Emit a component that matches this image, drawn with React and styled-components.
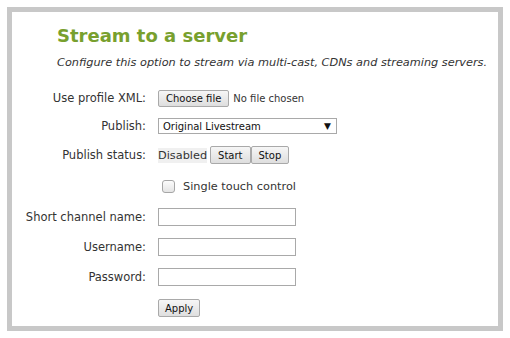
import React from "react";
import styled, { createGlobalStyle } from "styled-components";

const Global = createGlobalStyle`
  html, body { margin: 0; padding: 0; background: #ffffff; }
  body { font-family: "DejaVu Sans", Verdana, sans-serif; color: #333; }
`;

const Frame = styled.div`
  box-sizing: border-box;
  margin: 7px;
  width: 496px;
  height: 324px;
  border: 5px solid #c8c8c8;
  background: #fff;
  padding: 12px 0 0 0;
`;

const Title = styled.h1`
  margin: 0 0 0 45px;
  font-family: "DejaVu Sans", Verdana, sans-serif;
  font-weight: bold;
  font-size: 18px;
  line-height: 24px;
  color: #78a02e;
`;

const Desc = styled.p`
  margin: 8px 0 0 45px;
  font-size: 11.3px;
  font-style: italic;
  color: #333;
  line-height: 14px;
`;

const Form = styled.div`
  display: grid;
  grid-template-columns: 134px auto;
  column-gap: 12px;
  margin-top: 14px;
  align-items: center;
  font-size: 11.5px;
`;

const Label = styled.div`
  text-align: right;
  color: #333;
  height: ${(p) => p.$h || 30}px;
  line-height: ${(p) => p.$h || 30}px;
  white-space: nowrap;
`;

const Cell = styled.div`
  display: flex;
  align-items: center;
  height: ${(p) => p.$h || 30}px;
`;

const Btn = styled.button`
  font-family: "DejaVu Sans", Verdana, sans-serif;
  font-size: 10px;
  color: #111;
  height: ${(p) => p.$h || 17}px;
  padding: 0 ${(p) => p.$px || 7}px;
  border: 1px solid #a9a9a9;
  border-radius: 2px;
  background: linear-gradient(#f6f6f6, #dedede);
  margin: 0;
`;

const Plain = styled.span`
  font-size: 10px;
  color: #333;
  margin-left: 4px;
`;

const Status = styled.span`
  background: #f0f0f0;
  color: #333;
  font-size: 11.3px;
  padding: 1px 0;
  margin-right: 3px;
`;

const Select = styled.div`
  box-sizing: border-box;
  width: 179px;
  height: 16px;
  border: 1px solid #a9a9a9;
  display: flex;
  align-items: center;
  justify-content: space-between;
  padding: 0 5px 0 4px;
  font-size: 10px;
  color: #111;
`;

const Arrow = styled.span`
  font-size: 9px;
  color: #111;
`;

const Check = styled.span`
  box-sizing: border-box;
  width: 13px;
  height: 13px;
  border: 1px solid #a6a6a6;
  border-radius: 3px;
  background: linear-gradient(#fcfcfc, #e4e4e4);
  margin-left: 4px;
`;

const CheckLabel = styled.span`
  font-size: 11.3px;
  color: #333;
  margin-left: 8px;
`;

const Input = styled.input`
  box-sizing: border-box;
  width: 138px;
  height: 18px;
  border: 1px solid #a9a9a9;
  margin: 0;
  padding: 0 3px;
`;

export default function App() {
  return (
    <>
      <Global />
      <Frame>
        <Title>Stream to a server</Title>
        <Desc>Configure this option to stream via multi-cast, CDNs and streaming servers.</Desc>
        <Form>
          <Label $h={28}>Use profile XML:</Label>
          <Cell $h={28}>
            <Btn>Choose file</Btn>
            <Plain>No file chosen</Plain>
          </Cell>
          <Label $h={28}>Publish:</Label>
          <Cell $h={28}>
            <Select>
              <span>Original Livestream</span>
              <Arrow>▼</Arrow>
            </Select>
          </Cell>
          <Label $h={30}>Publish status:</Label>
          <Cell $h={30}>
            <Status>Disabled</Status>
            <Btn $h={18} $px={7}>Start</Btn>
            <Btn $h={18} $px={7}>Stop</Btn>
          </Cell>
          <Label $h={32}></Label>
          <Cell $h={32}>
            <Check />
            <CheckLabel>Single touch control</CheckLabel>
          </Cell>
          <Label $h={30}>Short channel name:</Label>
          <Cell $h={30}>
            <Input type="text" />
          </Cell>
          <Label $h={30}>Username:</Label>
          <Cell $h={30}>
            <Input type="text" />
          </Cell>
          <Label $h={30}>Password:</Label>
          <Cell $h={30}>
            <Input type="password" />
          </Cell>
          <Label $h={32}></Label>
          <Cell $h={32}>
            <Btn $h={18} $px={6}>Apply</Btn>
          </Cell>
        </Form>
      </Frame>
    </>
  );
}
